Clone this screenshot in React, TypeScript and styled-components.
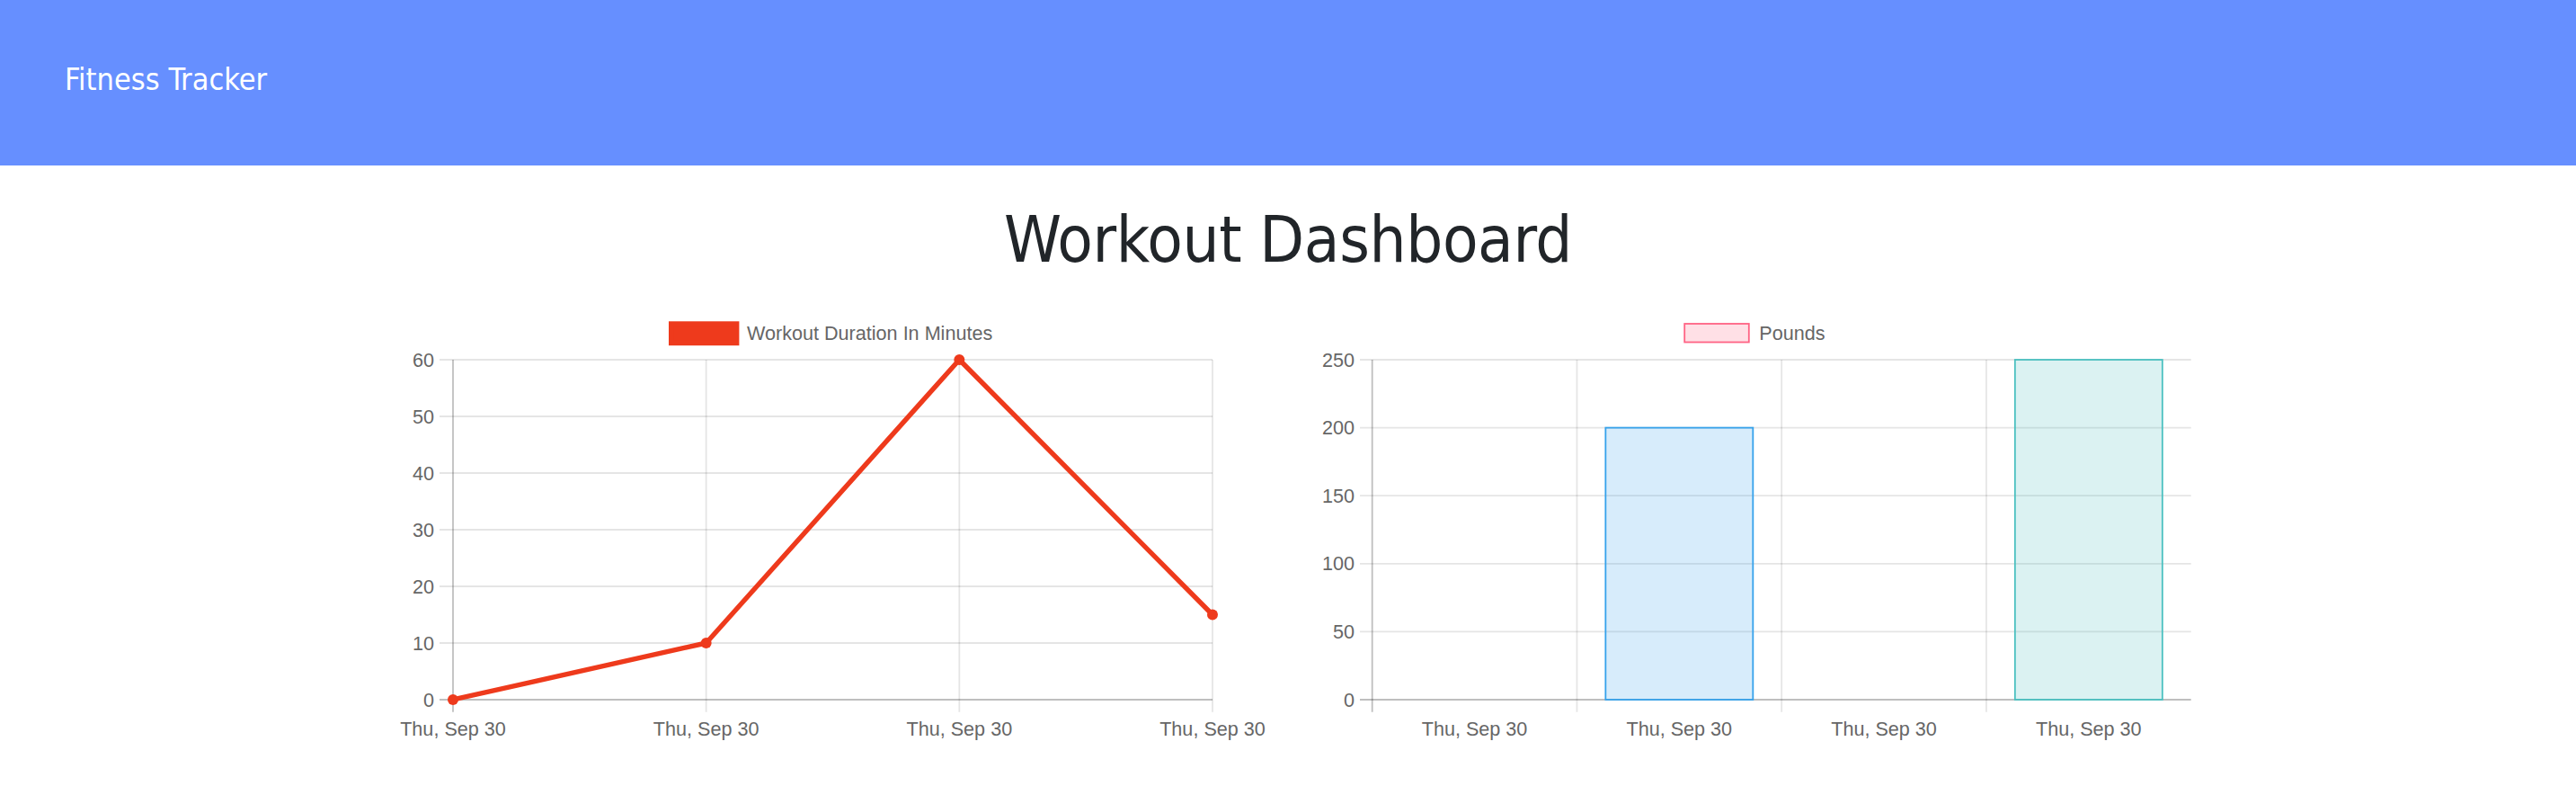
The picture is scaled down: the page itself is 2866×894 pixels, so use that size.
import React from "react";
import styled, { createGlobalStyle } from "styled-components";

const GlobalStyle = createGlobalStyle`
  html, body { margin: 0; padding: 0; background: #ffffff; }
  body { font-family: "DejaVu Sans Condensed", "DejaVu Sans", sans-serif; }
`;

const Page = styled.div`
  width: 2866px;
  min-height: 894px;
  background: #ffffff;
`;

const NavBar = styled.header`
  box-sizing: border-box;
  height: 184px;
  background: #668fff;
  padding: 68px 72px 0;
`;

const Brand = styled.span`
  display: block;
  font-family: "DejaVu Sans Condensed", "DejaVu Sans", sans-serif;
  font-stretch: condensed;
  font-size: 34px;
  line-height: 40px;
  color: #ffffff;
`;

const Title = styled.h1`
  margin: 39px 0 31px;
  text-align: center;
  font-family: "DejaVu Sans Condensed", "DejaVu Sans", sans-serif;
  font-stretch: condensed;
  font-weight: 400;
  font-size: 72px;
  line-height: 86px;
  letter-spacing: -0.4px;
  color: #212529;
`;

const ChartRow = styled.section`
  display: flex;
  gap: 61px;
  margin-left: 443px;
`;

const ChartCanvas = styled.svg`
  display: block;
  width: 967px;
  height: 490px;
  font-family: "Liberation Sans", Arial, sans-serif;
  font-size: 21.6px;
`;

const GRID = "rgba(0,0,0,0.1)";
const ZERO = "rgba(0,0,0,0.25)";
const TEXT = "#666666";
const SW = 1.8;
const TOP = 60;
const BOTTOM = 438;
const LABEL = "Thu, Sep 30";

const LineChart: React.FC = () => {
  const left = 61;
  const right = 906;
  const values = [0, 10, 60, 15];
  const step = (right - left) / 3;
  const xs = values.map((_, i) => left + step * i);
  const yOf = (v: number) => BOTTOM - (v * (BOTTOM - TOP)) / 60;
  const ticks = [60, 50, 40, 30, 20, 10, 0];
  const pts = values.map((v, i) => `${xs[i]},${yOf(v)}`).join(" ");
  return (
    <ChartCanvas viewBox="0 0 967 490">
      <rect x={303.7} y={20} width={73} height={21.5} fill="#ee3a1c" stroke="#ee3a1c" strokeWidth={5.4} />
      <text x={388} y={38.3} fill={TEXT}>Workout Duration In Minutes</text>
      {ticks.map((t) => (
        <g key={t}>
          <line x1={46} x2={right} y1={yOf(t)} y2={yOf(t)} stroke={t === 0 ? ZERO : GRID} strokeWidth={SW} />
          <text x={40} y={yOf(t) + 7.5} textAnchor="end" fill={TEXT}>{t}</text>
        </g>
      ))}
      {xs.map((x, i) => (
        <g key={i}>
          <line x1={x} x2={x} y1={TOP} y2={451.7} stroke={i === 0 ? ZERO : GRID} strokeWidth={SW} />
          <text x={x} y={478.3} textAnchor="middle" fill={TEXT}>{LABEL}</text>
        </g>
      ))}
      <polyline points={pts} fill="none" stroke="#ee3a1c" strokeWidth={5.4} strokeLinejoin="round" />
      {values.map((v, i) => (
        <circle key={i} cx={xs[i]} cy={yOf(v)} r={6} fill="#ee3a1c" />
      ))}
    </ChartCanvas>
  );
};

const BarChart: React.FC = () => {
  const left = 55.7;
  const right = 966.7;
  const cat = (right - left) / 4;
  const yOf = (v: number) => BOTTOM - (v * (BOTTOM - TOP)) / 250;
  const ticks = [250, 200, 150, 100, 50, 0];
  const bars = [
    { v: 0, fill: "rgba(255,99,132,0.2)", stroke: "rgb(255,99,132)" },
    { v: 200, fill: "rgba(54,162,235,0.2)", stroke: "rgb(54,162,235)" },
    { v: 0, fill: "rgba(255,206,86,0.2)", stroke: "rgb(255,206,86)" },
    { v: 250, fill: "rgba(75,192,192,0.2)", stroke: "rgb(75,192,192)" },
  ];
  const bw = cat * 0.72;
  return (
    <ChartCanvas viewBox="0 0 967 490">
      <rect x={403.2} y={20} width={71.6} height={20.5} fill="rgba(255,99,132,0.2)" stroke="rgb(255,99,132)" strokeWidth={SW} />
      <text x={486.3} y={38.3} fill={TEXT}>Pounds</text>
      {ticks.map((t) => (
        <g key={t}>
          <line x1={42} x2={right} y1={yOf(t)} y2={yOf(t)} stroke={t === 0 ? ZERO : GRID} strokeWidth={SW} />
          <text x={36} y={yOf(t) + 7.5} textAnchor="end" fill={TEXT}>{t}</text>
        </g>
      ))}
      {bars.map((_, i) => {
        const x = left + cat * i;
        return (
          <g key={i}>
            <line x1={x} x2={x} y1={TOP} y2={451.7} stroke={i === 0 ? ZERO : GRID} strokeWidth={SW} />
            <text x={x + cat / 2} y={478.3} textAnchor="middle" fill={TEXT}>{LABEL}</text>
          </g>
        );
      })}
      {bars.map((b, i) =>
        b.v > 0 ? (
          <rect
            key={i}
            x={left + cat * i + (cat - bw) / 2}
            y={yOf(b.v)}
            width={bw}
            height={BOTTOM - yOf(b.v)}
            fill={b.fill}
            stroke={b.stroke}
            strokeWidth={SW}
          />
        ) : null
      )}
    </ChartCanvas>
  );
};

export default function App() {
  return (
    <Page>
      <GlobalStyle />
      <NavBar>
        <Brand>Fitness Tracker</Brand>
      </NavBar>
      <Title>Workout Dashboard</Title>
      <ChartRow>
        <LineChart />
        <BarChart />
      </ChartRow>
    </Page>
  );
}
